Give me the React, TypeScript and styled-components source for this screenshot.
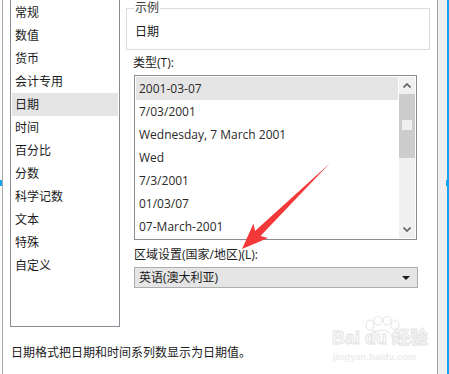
import React from 'react';
import styled, { createGlobalStyle } from 'styled-components';

// == data =========================================================================================
const categories = [
  '常规', '数值', '货币', '会计专用', '日期', '时间',
  '百分比', '分数', '科学记数', '文本', '特殊', '自定义',
];

const dateTypes = [
  '2001-03-07', '7/03/2001', 'Wednesday, 7 March 2001', 'Wed',
  '7/3/2001', '01/03/07', '07-March-2001',
];

// == styles =======================================================================================
const GlobalStyle = createGlobalStyle`
  html, body {
    margin: 0;
    padding: 0;
    background: #ffffff;
  }

  * {
    box-sizing: border-box;
  }
`;

const Root = styled.div`
  position: relative;
  display: flex;
  width: 449px;
  height: 374px;
  padding-left: 2px;
  overflow: hidden;
  background: #ffffff;
  color: #1b1b1b;
  font-family: "Open Sans", "Noto Sans CJK SC", sans-serif;
  font-size: 12px;
`;

const Panel = styled.div`
  display: flex;
  flex-direction: column;
  width: 436px;
  height: 100%;
  border-left: 1px solid #a8a8a8;
  border-right: 1px solid #a0a0a0;
`;

const Strip = styled.div`
  position: relative;
  width: 11px;
  height: 100%;
  background: #f0f0f0;
  border-right: 2px solid #12a4f0;
`;

const Tick = styled.div<{ $side: 'left' | 'right' }>`
  position: absolute;
  top: 180px;
  ${ ( p ) => p.$side === 'left' ? 'left: 0;' : 'right: -1px;' }
  width: 2px;
  height: 6px;
  background: #12a4f0;
`;

const Main = styled.div`
  display: flex;
  gap: 6px;
  padding-left: 7px;
`;

const ListBox = styled.div`
  display: flex;
  padding: 1px;
  border: 1px solid #8c8c94;
  background: #ffffff;
`;

const CategoryBox = styled( ListBox )`
  flex-direction: column;
  width: 110px;
  height: 328px;
  margin-top: -1px;
`;

const Item = styled.div<{ $selected?: boolean }>`
  height: 23px;
  padding-left: 3px;
  line-height: 23px;
  white-space: nowrap;
  background: ${ ( p ) => p.$selected ? '#e5e5e5' : 'transparent' };
`;

const RightCol = styled.div`
  display: flex;
  flex-direction: column;
  width: 304px;
`;

const GroupBox = styled.div`
  position: relative;
  height: 42px;
  margin-top: 8px;
  padding: 15px 0 0 8px;
  border: 1px solid #dcdcdc;
  line-height: 16px;
`;

const Legend = styled.span`
  position: absolute;
  top: -9px;
  left: 7px;
  padding: 0 1px;
  background: #ffffff;
  color: #3a3a3a;
  line-height: 16px;
`;

const Label = styled.div<{ $top: number; $indent: number }>`
  margin-top: ${ ( p ) => p.$top }px;
  padding-left: ${ ( p ) => p.$indent }px;
  height: 16px;
  line-height: 16px;
  white-space: nowrap;
`;

const TypeBox = styled( ListBox )`
  width: 283px;
  height: 165px;
  margin: 4px 0 0 8px;
`;

const TypeRows = styled.div`
  flex: 1;
  margin-right: 1px;
  color: #2a2a2a;
`;

const ScrollBar = styled.div`
  display: flex;
  flex-direction: column;
  width: 16px;
  background: #f0f0f0;
`;

const ScrollButton = styled.div`
  display: flex;
  align-items: center;
  justify-content: center;
  height: 17px;
`;

const Thumb = styled.div`
  display: flex;
  justify-content: center;
  height: 64px;
  padding-top: 26px;
  background: #cdcdcd;
`;

const Grip = styled.div`
  width: 10px;
  height: 10px;
  background: #efefef;
`;

const Track = styled.div`
  flex: 1;
`;

const Select = styled.div`
  display: flex;
  align-items: center;
  justify-content: space-between;
  width: 284px;
  height: 21px;
  margin: 4px 0 0 8px;
  padding: 0 7px 0 4px;
  border: 1px solid #adadad;
  background: #e5e5e5;
  line-height: 19px;
`;

const Caret = styled.span`
  width: 0;
  height: 0;
  border-left: 4px solid transparent;
  border-right: 4px solid transparent;
  border-top: 4px solid #1b1b1b;
`;

const Description = styled.div`
  margin-top: 18px;
  padding-left: 8px;
  line-height: 16px;
`;

const Overlay = styled.svg`
  position: absolute;
  left: 0;
  top: 0;
  pointer-events: none;
`;

const Watermark = styled.div`
  position: absolute;
  left: 332px;
  top: 314px;
  width: 92px;
  height: 52px;
  pointer-events: none;
`;

const WatermarkTitle = styled.div`
  position: absolute;
  left: 0;
  top: 15px;
  font-family: "Liberation Sans", "Noto Sans CJK SC", sans-serif;
  font-size: 18px;
  font-weight: bold;
  line-height: 18px;
  white-space: nowrap;
  color: #fbfbfb;
  -webkit-text-stroke: 0.8px #e2e2e2;
`;

const WatermarkUrl = styled.div`
  position: absolute;
  left: 1px;
  top: 37px;
  font-family: "Liberation Sans", sans-serif;
  font-size: 9.5px;
  font-weight: bold;
  line-height: 12px;
  white-space: nowrap;
  color: #ececec;
`;

// == component ====================================================================================
function Chevron( { up }: { up?: boolean } ) {
  return <svg width="8" height="5" viewBox="0 0 8 5">
    <path
      d={ up ? 'M0.5 4.5 L4 1 L7.5 4.5' : 'M0.5 0.5 L4 4 L7.5 0.5' }
      fill="none"
      stroke="#606060"
      strokeWidth="1.6"
    />
  </svg>;
}

function Arrow() {
  return <Overlay width="449" height="374" viewBox="0 0 449 374">
    <polygon
      points="242,249 268,238 260.5,236 329.6,163.4 255,231 253.5,223.5"
      fill="#f23838"
    />
  </Overlay>;
}

function Paw() {
  return <svg
    width="44"
    height="30"
    viewBox="0 0 44 30"
    style={ { position: 'absolute', left: 26, top: 2 } }
  >
    <g fill="none" stroke="#e4e4e4" strokeWidth="1">
      <ellipse cx="12" cy="9" rx="4" ry="5" />
      <ellipse cx="20" cy="4.5" rx="4" ry="4.5" />
      <ellipse cx="29" cy="4.5" rx="4" ry="4.5" />
      <ellipse cx="37" cy="9" rx="4" ry="5" />
      <path d="M13 29 C11 22 17 14 24 14 C31 14 37 22 35 29" />
    </g>
  </svg>;
}

export default function App() {
  return <>
    <GlobalStyle />
    <Root>
      <Tick $side="left" />
      <Panel>
        <Main>
          <CategoryBox>
            { categories.map( ( c ) => (
              <Item key={ c } $selected={ c === '日期' }>{ c }</Item>
            ) ) }
          </CategoryBox>
          <RightCol>
            <GroupBox>
              <Legend>示例</Legend>
              日期
            </GroupBox>
            <Label $top={ 5 } $indent={ 7 }>类型(T):</Label>
            <TypeBox>
              <TypeRows>
                { dateTypes.map( ( t, i ) => (
                  <Item key={ t } $selected={ i === 0 }>{ t }</Item>
                ) ) }
              </TypeRows>
              <ScrollBar>
                <ScrollButton><Chevron up /></ScrollButton>
                <Thumb><Grip /></Thumb>
                <Track />
                <ScrollButton><Chevron /></ScrollButton>
              </ScrollBar>
            </TypeBox>
            <Label $top={ 7 } $indent={ 8 }>区域设置(国家/地区)(L):</Label>
            <Select>
              <span>英语(澳大利亚)</span>
              <Caret />
            </Select>
          </RightCol>
        </Main>
        <Description>日期格式把日期和时间系列数显示为日期值。</Description>
      </Panel>
      <Strip>
        <Tick $side="right" />
      </Strip>
      <Arrow />
      <Watermark>
        <Paw />
        <WatermarkTitle>Bai du 经验</WatermarkTitle>
        <WatermarkUrl>jingyan.baidu.com</WatermarkUrl>
      </Watermark>
    </Root>
  </>;
}
